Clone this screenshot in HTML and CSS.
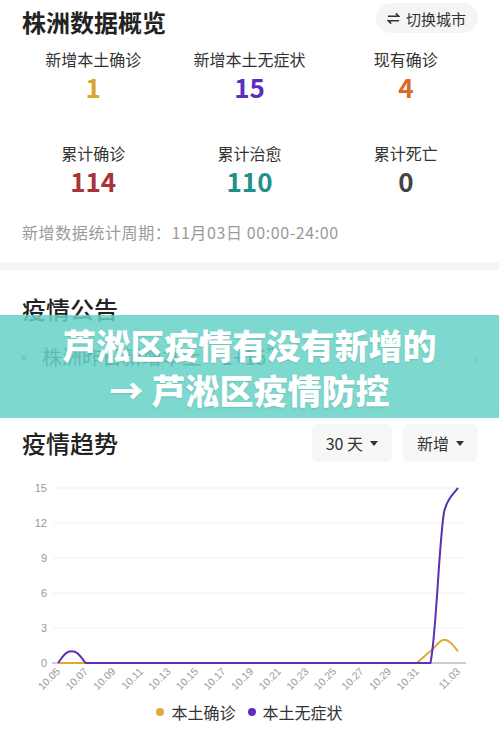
FILE: index.html
```html
<!DOCTYPE html>
<html lang="zh-CN">
<head>
    <meta charset="UTF-8">
    <title>株洲数据概览</title>
    <link rel="stylesheet" href="styles.css">
</head>
<body>

<div class="page">
    <section class="overview">
        <div class="head">
            <h2 class="title title-strong">株洲数据概览</h2>
            <button class="switch">
                <svg class="switch-icon" viewBox="0 0 14 14" width="13" height="13">
                    <path d="M1 4.5 H12.5 L9.5 1.5" />
                    <path d="M13 9.5 H1.5 L4.5 12.5" />
                </svg>
                切换城市
            </button>
        </div>

        <div class="stats">
            <div class="stat">
                <div class="label">新增本土确诊</div>
                <div class="num gold">1</div>
            </div>
            <div class="stat">
                <div class="label">新增本土无症状</div>
                <div class="num purple">15</div>
            </div>
            <div class="stat">
                <div class="label">现有确诊</div>
                <div class="num orange">4</div>
            </div>
            <div class="stat">
                <div class="label">累计确诊</div>
                <div class="num red">114</div>
            </div>
            <div class="stat">
                <div class="label">累计治愈</div>
                <div class="num teal">110</div>
            </div>
            <div class="stat">
                <div class="label">累计死亡</div>
                <div class="num dark">0</div>
            </div>
        </div>

        <p class="period">新增数据统计周期：11月03日 00:00-24:00</p>
    </section>

    <div class="divider"></div>

    <section class="notice">
        <div class="head">
            <h2 class="title">疫情公告</h2>
        </div>
        <div class="notice-item">
            <span class="bullet"></span>
            <span class="notice-text">株洲昨日新增本土“1+15”</span>
            <span class="chev">›</span>
        </div>
    </section>

    <div class="divider"></div>

    <section class="trend">
        <div class="head head-center">
            <h2 class="title">疫情趋势</h2>
            <div class="filters">
                <button class="select">30 天 <i class="caret"></i></button>
                <button class="select">新增 <i class="caret"></i></button>
            </div>
        </div>

        <svg class="chart" viewBox="0 0 499 230" width="499" height="230">
            <g class="grid">
                <line x1="53" y1="18" x2="466" y2="18" />
                <line x1="53" y1="53" x2="466" y2="53" />
                <line x1="53" y1="88" x2="466" y2="88" />
                <line x1="53" y1="123" x2="466" y2="123" />
                <line x1="53" y1="158" x2="466" y2="158" />
            </g>
            <line class="axis" x1="52" y1="193" x2="466" y2="193" />
            <g class="ylabels">
                <text x="47" y="22">15</text>
                <text x="47" y="57">12</text>
                <text x="47" y="92">9</text>
                <text x="47" y="127">6</text>
                <text x="47" y="162">3</text>
                <text x="47" y="197">0</text>
            </g>
            <g class="xlabels">
                <text x="61" y="202" transform="rotate(-45 61 202)">10.05</text>
                <text x="88.6" y="202" transform="rotate(-45 88.6 202)">10.07</text>
                <text x="116.2" y="202" transform="rotate(-45 116.2 202)">10.09</text>
                <text x="143.8" y="202" transform="rotate(-45 143.8 202)">10.11</text>
                <text x="171.3" y="202" transform="rotate(-45 171.3 202)">10.13</text>
                <text x="198.9" y="202" transform="rotate(-45 198.9 202)">10.15</text>
                <text x="226.5" y="202" transform="rotate(-45 226.5 202)">10.17</text>
                <text x="254.1" y="202" transform="rotate(-45 254.1 202)">10.19</text>
                <text x="281.7" y="202" transform="rotate(-45 281.7 202)">10.21</text>
                <text x="309.3" y="202" transform="rotate(-45 309.3 202)">10.23</text>
                <text x="336.9" y="202" transform="rotate(-45 336.9 202)">10.25</text>
                <text x="364.4" y="202" transform="rotate(-45 364.4 202)">10.27</text>
                <text x="392" y="202" transform="rotate(-45 392 202)">10.29</text>
                <text x="419.6" y="202" transform="rotate(-45 419.6 202)">10.31</text>
                <text x="461" y="202" transform="rotate(-45 461 202)">11.03</text>
            </g>
            <!-- 本土确诊 -->
            <path class="line line-gold" d="M58,193 L416.6,193 C422,189 425,185 430.4,181.3 C436,177 439,169.7 444.2,169.7 C449,169.7 453,175 458,181.3" />
            <!-- 本土无症状 -->
            <path class="line line-purple" d="M58,193 C64,185 66,181.3 71.8,181.3 C77.6,181.3 80,186 85.6,193 L430.4,193 C436,170 439,70 444.2,41.3 C447,30 452,25 458,18" />
        </svg>

        <div class="legend">
            <span class="legend-item"><i class="ldot ldot-gold"></i>本土确诊</span>
            <span class="legend-item"><i class="ldot ldot-purple"></i>本土无症状</span>
        </div>

        <p class="note">* 根据卫健委通报数据统计，本土病例含确诊与无症状感染者</p>
    </section>

    <div class="banner">芦淞区疫情有没有新增的<br>→ 芦淞区疫情防控</div>
</div>

</body>
</html>
```

FILE: styles.css
```css
body {
    margin: 0;
    background-color: #fff;
    font-family: "Noto Sans CJK SC", "Noto Sans", sans-serif;
    color: #333;
}
.page {
    position: relative;
    width: 499px;
    overflow: hidden;
}
.head {
    display: flex;
    justify-content: space-between;
    align-items: flex-start;
    padding: 0 21px 0 22px;
}
.head-center {
    align-items: center;
}
.title {
    margin: 0;
    font-size: 24px;
    line-height: 30px;
    font-weight: 500;
    color: #222;
}
.title-strong {
    margin-top: 4px;
    font-weight: 700;
}
.overview {
    padding: 3px 0 20px;
}
.switch {
    display: flex;
    align-items: center;
    gap: 6px;
    height: 30px;
    padding: 0 12px 0 11px;
    border: none;
    border-radius: 15px;
    background-color: #f5f5f5;
    font-family: inherit;
    font-size: 15px;
    color: #333;
}
.switch-icon {
    fill: none;
    stroke: #333;
    stroke-width: 1.6;
}
.stats {
    display: grid;
    grid-template-columns: repeat(3, 1fr);
    row-gap: 41px;
    margin-top: 12px;
    padding: 0 15px;
    text-align: center;
}
.label {
    font-size: 16px;
    line-height: 20px;
    color: #333;
}
.num {
    margin-top: 3px;
    font-size: 26px;
    line-height: 30px;
    font-weight: 700;
}
.gold { color: #d8a82c; }
.purple { color: #5a2fc0; }
.orange { color: #d86a2a; }
.red { color: #a83338; }
.teal { color: #1f908a; }
.dark { color: #444; }
.period {
    margin: 26px 0 0;
    padding-left: 22px;
    font-size: 16px;
    line-height: 20px;
    letter-spacing: 0.6px;
    color: #9a9a9a;
}
.divider {
    height: 8px;
    background-color: #f5f5f5;
}
.notice {
    padding: 24px 0 36px;
}
.notice-item {
    display: flex;
    align-items: center;
    margin-top: 21px;
    padding: 0 20px 0 21px;
    line-height: 24px;
}
.bullet {
    width: 5px;
    height: 5px;
    border-radius: 50%;
    background-color: #999;
}
.notice-text {
    flex: 1;
    margin-left: 16px;
    font-size: 20px;
    color: #333;
}
.chev {
    font-size: 22px;
    color: #bbb;
}
.trend {
    padding-top: 11px;
}
.filters {
    display: flex;
    gap: 11px;
}
.select {
    display: flex;
    align-items: center;
    gap: 7px;
    height: 38px;
    padding: 0 14px;
    border: none;
    border-radius: 6px;
    background-color: #f7f7f7;
    font-family: inherit;
    font-size: 16px;
    color: #333;
}
.caret {
    width: 0;
    height: 0;
    border-left: 4px solid transparent;
    border-right: 4px solid transparent;
    border-top: 5px solid #333;
}
.chart {
    display: block;
    margin-top: 8px;
}
.grid line {
    stroke: #f0f0f0;
    stroke-width: 1;
}
.axis {
    stroke: #999;
    stroke-width: 1;
}
.ylabels text {
    font-family: "Liberation Sans", sans-serif;
    font-size: 11px;
    fill: #999;
    text-anchor: end;
}
.xlabels text {
    font-family: "Liberation Sans", sans-serif;
    font-size: 10.5px;
    fill: #999;
    text-anchor: end;
}
.line {
    fill: none;
    stroke-width: 2;
    stroke-linejoin: round;
}
.line-gold { stroke: #e0a832; }
.line-purple { stroke: #5a2fb5; }
.legend {
    display: flex;
    justify-content: center;
    gap: 12px;
    font-size: 16px;
    line-height: 24px;
    color: #333;
}
.legend-item {
    display: flex;
    align-items: center;
    gap: 7px;
}
.ldot {
    width: 8px;
    height: 8px;
    border-radius: 50%;
}
.ldot-gold { background-color: #e0a832; }
.ldot-purple { background-color: #5a2fc0; }
.note {
    margin: 8px 0 0;
    padding-left: 22px;
    font-size: 16px;
    line-height: 20px;
    color: #999;
}
.banner {
    position: absolute;
    top: 315px;
    left: 0;
    right: 0;
    height: 103px;
    padding-top: 7px;
    box-sizing: border-box;
    background-color: rgba(102, 210, 199, 0.85);
    text-align: center;
    font-size: 34px;
    line-height: 45px;
    font-weight: 900;
    color: #fff;
    text-shadow: 0 1px 2px rgba(0, 0, 0, 0.12);
}
```
